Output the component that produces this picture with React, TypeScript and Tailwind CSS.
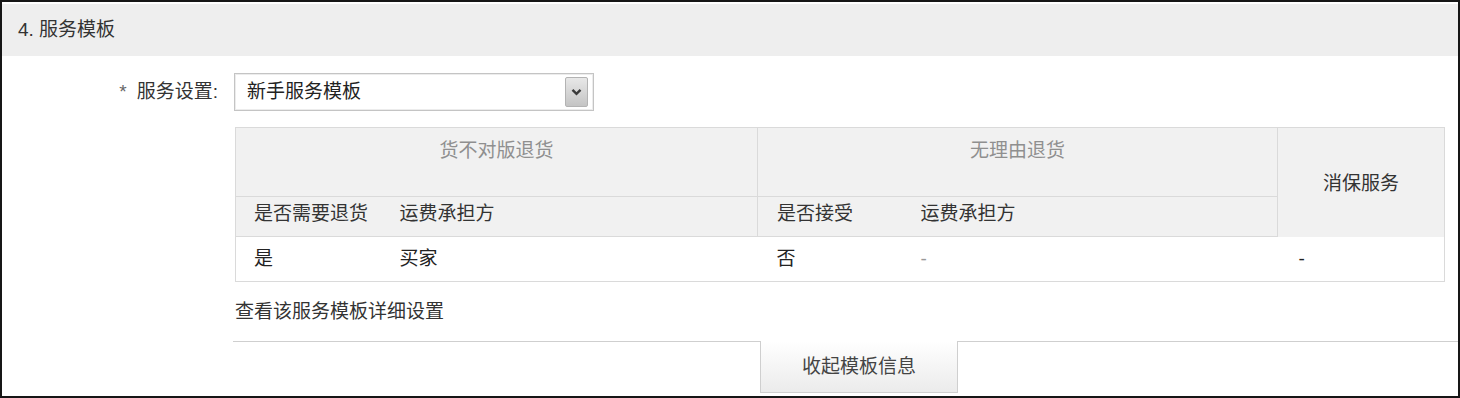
import React from "react";

function ChevronDown() {
  return (
    <svg width="11" height="8" viewBox="0 0 11 8" className="block">
      <polyline points="1.5,1.8 5.5,5.8 9.5,1.8" fill="none" stroke="#3a3a3a" strokeWidth="2.4" />
    </svg>
  );
}

function ServiceSelect() {
  return (
    <div className="flex h-[38px] w-[360px] items-center border border-[#c4c4c4] bg-white shadow-[inset_0_0_0_1px_#ececec]">
      <span className="flex-1 pl-[12px] text-[19px] text-[#222]">新手服务模板</span>
      <span className="mr-[5px] flex h-[30px] w-[23px] items-center justify-center rounded-[2px] border border-[#b3b3b3] bg-gradient-to-b from-[#e8e8e8] to-[#c4c4c4]">
        <ChevronDown />
      </span>
    </div>
  );
}

function TemplateTable() {
  const th = "border-[#dadada] font-normal text-[19px]";
  return (
    <table className="w-[1209px] table-fixed border-collapse border border-[#dadada] text-left">
      <colgroup>
        <col className="w-[146px]" />
        <col className="w-[376px]" />
        <col className="w-[145px]" />
        <col className="w-[375px]" />
        <col className="w-[167px]" />
      </colgroup>
      <thead className="bg-[#f1f1f1]">
        <tr className="h-[69px]">
          <th colSpan={2} className={`${th} border-r border-b pt-[11px] text-center align-top text-[#8f8f8f]`}>
            货不对版退货
          </th>
          <th colSpan={2} className={`${th} border-r border-b pt-[11px] text-center align-top text-[#8f8f8f]`}>
            无理由退货
          </th>
          <th rowSpan={2} className={`${th} pt-[3px] text-center align-middle text-[#333]`}>
            消保服务
          </th>
        </tr>
        <tr className="h-[40px]">
          <th className={`${th} border-b pl-[18px] pb-[5px] text-[#333]`}>是否需要退货</th>
          <th className={`${th} border-r border-b pl-[18px] pb-[5px] text-[#333]`}>运费承担方</th>
          <th className={`${th} border-b pl-[19px] pb-[5px] text-[#333]`}>是否接受</th>
          <th className={`${th} border-r border-b pl-[18px] pb-[5px] text-[#333]`}>运费承担方</th>
        </tr>
      </thead>
      <tbody>
        <tr className="h-[45px] bg-white text-[19px]">
          <td className="pl-[18px] text-[#222]">是</td>
          <td className="pl-[18px] text-[#222]">买家</td>
          <td className="pl-[19px] text-[#222]">否</td>
          <td className="pl-[18px] text-[#999]">-</td>
          <td className="pl-[21px] text-[#222]">-</td>
        </tr>
      </tbody>
    </table>
  );
}

export default function App() {
  return (
    <div className="h-[398px] w-[1460px] overflow-hidden border-2 border-[#161616] bg-white font-['Liberation_Sans','Noto_Sans_CJK_SC',sans-serif] leading-[24px]">
      <div className="mt-[2px] flex h-[52px] items-center bg-[#eeeeee] pl-[16px] text-[19px] text-[#333]">
        4. 服务模板
      </div>

      <div className="mt-[17px] flex items-center">
        <label className="w-[216px] text-right text-[19px] text-[#333]">
          <span className="mr-[10px] text-[#666]">*</span>服务设置:
        </label>
        <div className="ml-[16px]">
          <ServiceSelect />
        </div>
      </div>

      <div className="ml-[233px] mt-[16px]">
        <TemplateTable />
        <div className="mt-[18px] text-[19px] text-[#333]">查看该服务模板详细设置</div>
      </div>

      <div className="mt-[17px] flex">
        <div className="ml-[231px] w-[527px] border-t border-[#cfcfcf]" />
        <div className="flex h-[52px] w-[198px] items-center justify-center border-x border-b border-[#cfcfcf] bg-gradient-to-b from-white to-[#ebebeb] text-[19px] text-[#444]">
          收起模板信息
        </div>
        <div className="flex-1 border-t border-[#cfcfcf]" />
      </div>
    </div>
  );
}
